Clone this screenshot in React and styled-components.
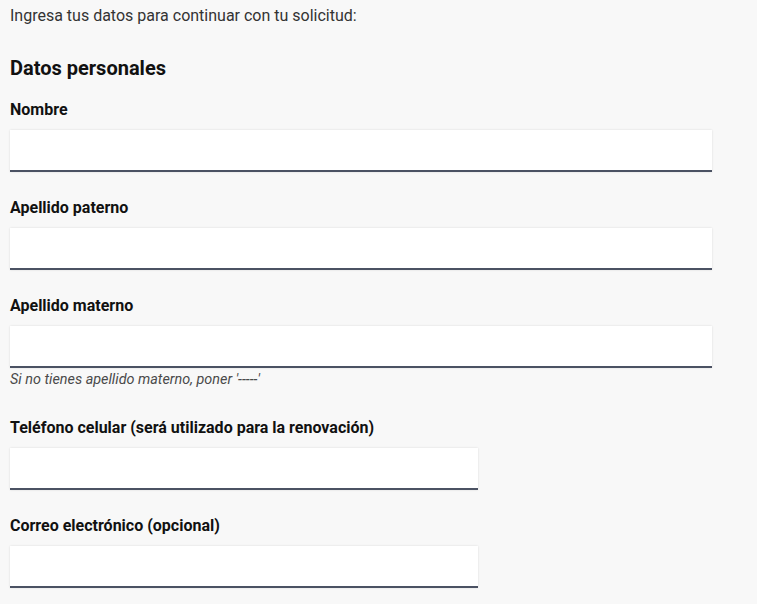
import React from "react";
import styled, { createGlobalStyle } from "styled-components";

const GlobalStyle = createGlobalStyle`
  html, body {
    margin: 0;
    padding: 0;
    background: #f8f8f8;
  }
  body {
    font-family: Roboto, "Liberation Sans", Arial, sans-serif;
  }
`;

const fields = [
  { id: "nombre", label: "Nombre" },
  { id: "paterno", label: "Apellido paterno" },
  {
    id: "materno",
    label: "Apellido materno",
    hint: "Si no tienes apellido materno, poner '-----'",
  },
  {
    id: "telefono",
    label: "Teléfono celular (será utilizado para la renovación)",
    short: true,
  },
  { id: "correo", label: "Correo electrónico (opcional)", short: true },
];

export default function App() {
  return (
    <>
      <GlobalStyle />
      <Page>
        <Intro>Ingresa tus datos para continuar con tu solicitud:</Intro>
        <SectionTitle>Datos personales</SectionTitle>
        {fields.map((f) => (
          <Field key={f.id}>
            <Label htmlFor={f.id}>{f.label}</Label>
            <Input id={f.id} type="text" $short={f.short} />
            {f.hint && <Hint>{f.hint}</Hint>}
          </Field>
        ))}
      </Page>
    </>
  );
}

const Page = styled.main`
  padding: 6px 45px 0 10px;
  display: flex;
  flex-direction: column;
`;

const Intro = styled.p`
  margin: 0;
  font-size: 16px;
  line-height: 20px;
  color: #333;
`;

const SectionTitle = styled.h2`
  margin: 30px 0 19px;
  font-size: 20px;
  line-height: 24px;
  font-weight: 700;
  color: #111;
`;

const Field = styled.div`
  display: flex;
  flex-direction: column;
  margin-bottom: 25px;
`;

const Label = styled.label`
  padding-top: 1px;
  font-size: 16px;
  line-height: 20px;
  font-weight: 700;
  color: #111;
  margin-bottom: 10px;
`;

const Input = styled.input`
  box-sizing: border-box;
  width: ${({ $short }) => ($short ? "468px" : "100%")};
  height: 42px;
  border: none;
  border-bottom: 2px solid #4b5263;
  background: #fff;
  box-shadow: 0 0 2px rgba(0, 0, 0, 0.12);
  padding: 0 10px;
  font-family: inherit;
  font-size: 16px;
  outline: none;
`;

const Hint = styled.span`
  margin: 2px 0 2px;
  font-size: 14.4px;
  line-height: 20px;
  font-style: italic;
  color: #4a4a4a;
`;
